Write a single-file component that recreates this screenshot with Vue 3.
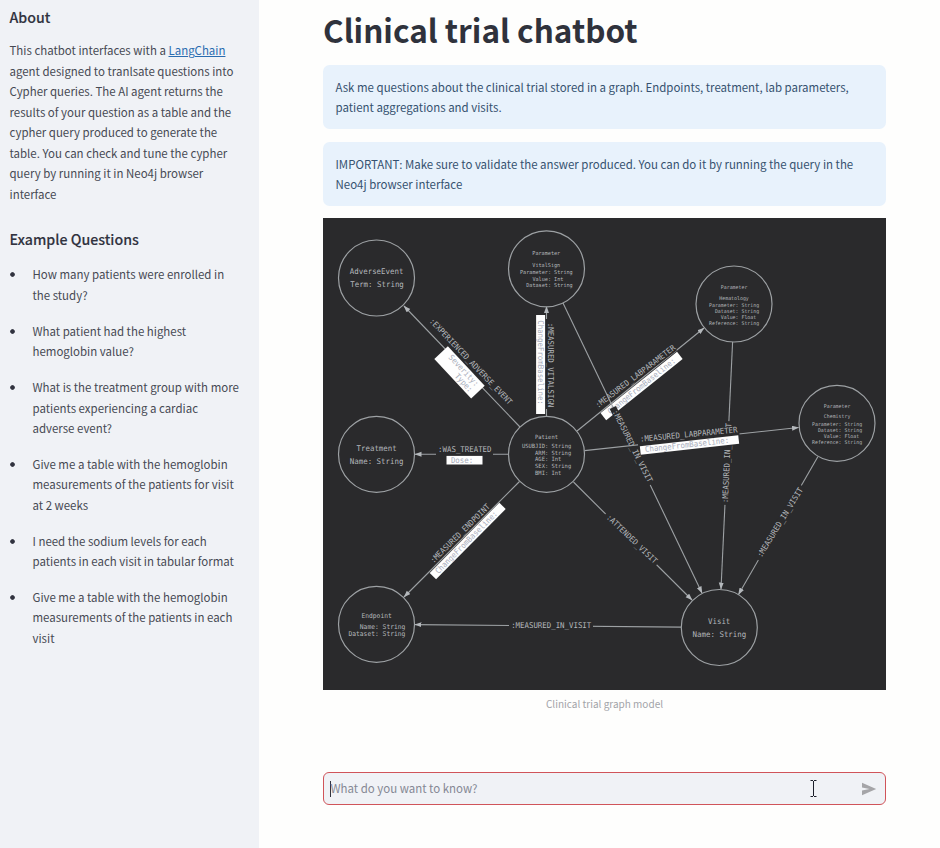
<script setup>
const intro = [
  'agent designed to tranlsate questions into',
  'Cypher queries. The AI agent returns the',
  'results of your question as a table and the',
  'cypher query produced to generate the',
  'table. You can check and tune the cypher',
  'query by running it in Neo4j browser',
  'interface'
]
const questions = [
  ['How many patients were enrolled in', 'the study?'],
  ['What patient had the highest', 'hemoglobin value?'],
  ['What is the treatment group with more', 'patients experiencing a cardiac', 'adverse event?'],
  ['Give me a table with the hemoglobin', 'measurements of the patients for visit', 'at 2 weeks'],
  ['I need the sodium levels for each', 'patients in each visit in tabular format'],
  ['Give me a table with the hemoglobin', 'measurements of the patients in each', 'visit']
]
const alerts = [
  ['Ask me questions about the clinical trial stored in a graph. Endpoints, treatment, lab parameters,', 'patient aggregations and visits.'],
  ['IMPORTANT: Make sure to validate the answer produced. You can do it by running the query in the', 'Neo4j browser interface']
]

// Node text rows: [text, x of the left edge, y of the middle]; adv is the width of one character.
const nodes = [
  { x: 376.5, y: 278, adv: 4.47, rows: [['AdverseEvent', 349.8, 271.7], ['Term: String', 350.2, 284.6]] },
  { x: 546.5, y: 268.8, adv: 3.1, rows: [['Parameter', 532.3, 253.5], ['VitalSign', 532.3, 265], ['Parameter: String', 520, 272.6], ['Value: Int', 532.4, 279.1], ['Dataset: String', 526.2, 285.2]] },
  { x: 734, y: 304, adv: 2.95, rows: [['Parameter', 720.8, 287], ['Hematology', 719.3, 298], ['Parameter: String', 709, 305.5], ['Dataset: String', 714.9, 311.2], ['Value: Float', 720.8, 317], ['Reference: String', 709, 322.9]] },
  { x: 837, y: 423.3, adv: 2.95, rows: [['Parameter', 823.8, 405.8], ['Chemistry', 823.8, 416.6], ['Parameter: String', 812, 424.2], ['Dataset: String', 817.9, 430.1], ['Value: Float', 823.8, 435.9], ['Reference: String', 812, 441.8]] },
  { x: 546.5, y: 454.3, adv: 3.28, rows: [['Patient', 535, 437], ['USUBJID: String', 522, 446.4], ['ARM: String', 535.1, 453], ['AGE: Int', 535.1, 459.5], ['SEX: String', 535.1, 466.1], ['BMI: Int', 535.1, 472.6]] },
  { x: 376.5, y: 454.3, adv: 4.47, rows: [['Treatment', 356.5, 448.2], ['Name: String', 349.8, 461]] },
  { x: 376.5, y: 624.3, adv: 3.8, rows: [['Endpoint', 361.4, 615.4], ['Name: String', 359.8, 626.7], ['Dataset: String', 348.4, 634.2]] },
  { x: 719.3, y: 627.5, adv: 4.47, rows: [['Visit', 708, 621.6], ['Name: String', 692.6, 634.6]] }
]

const edges = [
  { line: [520, 427, 404, 306], label: ':EXPERIENCED_ADVERSE_EVENT', at: [471, 361.5, 46.3], box: [459.5, 372.4, 47, 54, 18.5], props: [['Severity:', 1.5, -4.3], ['Type:', 10.5, 4]] },
  { line: [546.5, 416, 546.5, 306.5], mask: [548, 364, 90, 90, 6], label: ':MEASURED_VITALSIGN', at: [551, 365, 90], box: [540.6, 364.5, 90, 99, 9], props: [['ChangeFromBaseline:', -2, 0]] },
  { line: [577, 431, 704, 328], mask: [635.3, 376.3, -37.3, 98, 9], label: ':MEASURED_LABPARAMETER', at: [635.3, 376.3, -37.3], box: [641.6, 386, -38.7, 98, 9], props: [['ChangeFromBaseline:', 0, 0]] },
  { line: [508.5, 454.3, 415, 454.3], mask: [464.5, 454, 0, 57, 6], label: ':WAS_TREATED', at: [464.8, 449, 0], box: [464.5, 460.2, 0, 36, 8.6], props: [['Dose:', -2.5, -0.3]] },
  { line: [519.5, 481.5, 404, 597], label: ':MEASURED_ENDPOINT', at: [460, 533.3, -44.6], box: [467.7, 541, -45.3, 99, 9], props: [['ChangeFromBaseline:', -2, 0]] },
  { line: [573.5, 482, 692, 600], mask: [631.5, 539, 44, 72, 6], label: ':ATTENDED_VISIT', at: [632, 539, 43.8] },
  { line: [563, 303, 702, 593], mask: [632, 446, 63.5, 86, 7], label: ':MEASURED_IN_VISIT', at: [632.6, 446, 63.5] },
  { line: [732.6, 342, 721, 589], mask: [726.8, 463, -87.5, 84, 7], label: ':MEASURED_IN_VISIT', at: [726.8, 463, -87.5] },
  { line: [818, 456.5, 738.5, 594.5], mask: [779.5, 522.5, -59, 86, 7], label: ':MEASURED_IN_VISIT', at: [780, 522.3, -58.6] },
  { line: [584.5, 450.6, 798.5, 427.5], mask: [688.5, 436.5, -5.6, 102, 10], label: ':MEASURED_LABPARAMETER', at: [688.7, 434.3, -5.5], box: [689.5, 445, -6.3, 99, 8.6], props: [['ChangeFromBaseline:', -2.4, -0.4]] },
  { line: [681, 627.1, 415, 624.6], mask: [551, 626, 0, 84, 7], label: ':MEASURED_IN_VISIT', at: [551.2, 625.2, 0] }
]
const ADV = 4.45
const place = (p) => `translate(${p[0]} ${p[1]}) rotate(${p[2]})`
</script>

<template>
  <div class="app">
    <aside class="sidebar">
      <h3 class="about">About</h3>
      <p class="intro">
        <span class="line">This chatbot interfaces with a <a href="#">LangChain</a></span>
        <span v-for="t in intro" :key="t" class="line">{{ t }}</span>
      </p>
      <h3 class="examples">Example Questions</h3>
      <ul class="questions">
        <li v-for="(q, i) in questions" :key="i">
          <span v-for="t in q" :key="t" class="line">{{ t }}</span>
        </li>
      </ul>
    </aside>

    <main class="main">
      <h1>Clinical trial chatbot</h1>
      <div v-for="(a, i) in alerts" :key="i" class="alert">
        <span v-for="t in a" :key="t" class="line">{{ t }}</span>
      </div>

      <figure>
        <svg class="graph" viewBox="323 218 563 472" width="563" height="472">
          <defs>
            <marker id="arrow" markerUnits="userSpaceOnUse" markerWidth="8" markerHeight="6" refX="6.5" refY="2.5" orient="auto">
              <path d="M0 0L7 2.5L0 5Z" fill="#b4b8bc" />
            </marker>
          </defs>
          <g v-for="(e, i) in edges" :key="i">
            <line class="edge" :x1="e.line[0]" :y1="e.line[1]" :x2="e.line[2]" :y2="e.line[3]" marker-end="url(#arrow)" />
            <rect v-if="e.mask" class="mask" :x="-e.mask[3] / 2" :y="-e.mask[4] / 2" :width="e.mask[3]" :height="e.mask[4]" :transform="place(e.mask)" />
            <g v-if="e.box" :transform="place(e.box)">
              <rect class="box" :x="-e.box[3] / 2" :y="-e.box[4] / 2" :width="e.box[3]" :height="e.box[4]" />
              <text v-for="p in e.props" :key="p[0]" class="prop" :x="p[1] - p[0].length * ADV / 2" :y="p[2] + 2.6" :textLength="p[0].length * ADV" lengthAdjust="spacingAndGlyphs">{{ p[0] }}</text>
            </g>
            <text class="label" :transform="place(e.at)" :x="-e.label.length * ADV / 2" y="2.8" :textLength="e.label.length * ADV" lengthAdjust="spacingAndGlyphs">{{ e.label }}</text>
          </g>
          <g v-for="(n, i) in nodes" :key="'n' + i">
            <circle class="node" :cx="n.x" :cy="n.y" r="38" />
            <text v-for="(r, j) in n.rows" :key="j" class="row" :x="r[1]" :y="r[2] + n.adv * 0.6" :font-size="n.adv / 0.57" :textLength="r[0].length * n.adv" lengthAdjust="spacingAndGlyphs">{{ r[0] }}</text>
          </g>
        </svg>
        <figcaption>Clinical trial graph model</figcaption>
      </figure>

      <div class="chat">
        <i class="caret"></i>
        <span class="placeholder">What do you want to know?</span>
        <svg class="ibeam" width="7" height="17" viewBox="0 0 7 17"><path d="M.5 .5H3M4 .5H6.500M3.500 1V16M.5 16.500H3M4 16.500H6.500" /></svg>
        <svg class="send" width="16" height="14" viewBox="0 0 16 14"><path d="M1 .7L15.200 7L1 13.300V8.500L8.500 7L1 5.500Z" fill="#a5a5a8" /></svg>
      </div>
    </main>
  </div>
</template>

<style>
body {
  background: #fefefd;
}
</style>

<style scoped>
.app {
  display: flex;
  height: 848px;
  overflow: hidden;
  font-family: "Noto Sans CJK SC", "Open Sans", sans-serif;
  font-size: 11.460px;
  color: #464953;
}
.line {
  display: block;
  white-space: nowrap;
}
h1, h3, p, ul, figure {
  margin: 0;
  padding: 0;
}
.sidebar {
  box-sizing: border-box;
  width: 259px;
  flex: none;
  padding: 7px 0 0 9.500px;
  background: #f0f2f6;
  line-height: 20.500px;
}
h3 {
  height: 20px;
  line-height: 20px;
  font-size: 14.200px;
  font-weight: 500;
  color: #31333f;
  -webkit-text-stroke: 0.120px #31333f;
}
.intro {
  margin-top: 13.200px;
}
a {
  color: #2a6cb0;
}
.examples {
  margin-top: 25.300px;
}
.questions {
  display: flex;
  flex-direction: column;
  gap: 15.300px;
  margin-top: 15px;
  list-style: none;
}
.questions li {
  padding-left: 23px;
  background: radial-gradient(circle at 2.500px 10.500px, #31333f 1.900px, transparent 2.700px);
}
.main {
  width: 563px;
  padding-left: 64px;
}
h1 {
  height: 65px;
  line-height: 59px;
  font-size: 31.500px;
  font-weight: 700;
  color: #2f323c;
  white-space: nowrap;
}
.alert {
  box-sizing: border-box;
  height: 64px;
  margin-bottom: 13px;
  padding: 12px 12.500px;
  border-radius: 6.500px;
  background: #e8f2fc;
  color: #35516f;
  line-height: 20px;
}
.alert:first-of-type {
  padding-top: 13px;
  line-height: 19.500px;
}
figure {
  margin-top: -1px;
}
.graph {
  display: block;
  background: #2a2a2c;
}
.edge {
  stroke: #9da1a4;
  stroke-width: 1.100;
}
.node {
  fill: #2a2a2c;
  stroke: #9da1a4;
  stroke-width: 1.200;
}
.mask {
  fill: #2a2a2c;
}
.box {
  fill: #fefefe;
}
text {
  font-family: "DejaVu Sans Mono", monospace;
  white-space: pre;
  text-rendering: geometricPrecision;
}
.label {
  font-size: 8px;
  fill: #b4b7bb;
}
.prop {
  font-size: 8px;
  fill: #a8adbb;
}
.row {
  fill: #b4b7bb;
}
figcaption {
  margin-top: 4px;
  height: 21px;
  line-height: 20px;
  font-size: 10.030px;
  text-align: center;
  color: #a3a4a9;
}
.chat {
  box-sizing: border-box;
  position: relative;
  display: flex;
  align-items: center;
  height: 33px;
  margin-top: 57px;
  padding: 0 8px 0 6px;
  border: 1px solid #d0545a;
  border-radius: 6px;
  background: #f0f2f6;
}
.caret {
  width: 1px;
  height: 16px;
  background: #31333f;
}
.placeholder {
  margin: 0 0 2px -0.500px;
  color: #858894;
  white-space: nowrap;
}
.ibeam {
  position: absolute;
  left: 486px;
  top: 7px;
}
.ibeam path {
  fill: none;
  stroke: #1c1f2a;
}
.send {
  margin-left: auto;
}
</style>
